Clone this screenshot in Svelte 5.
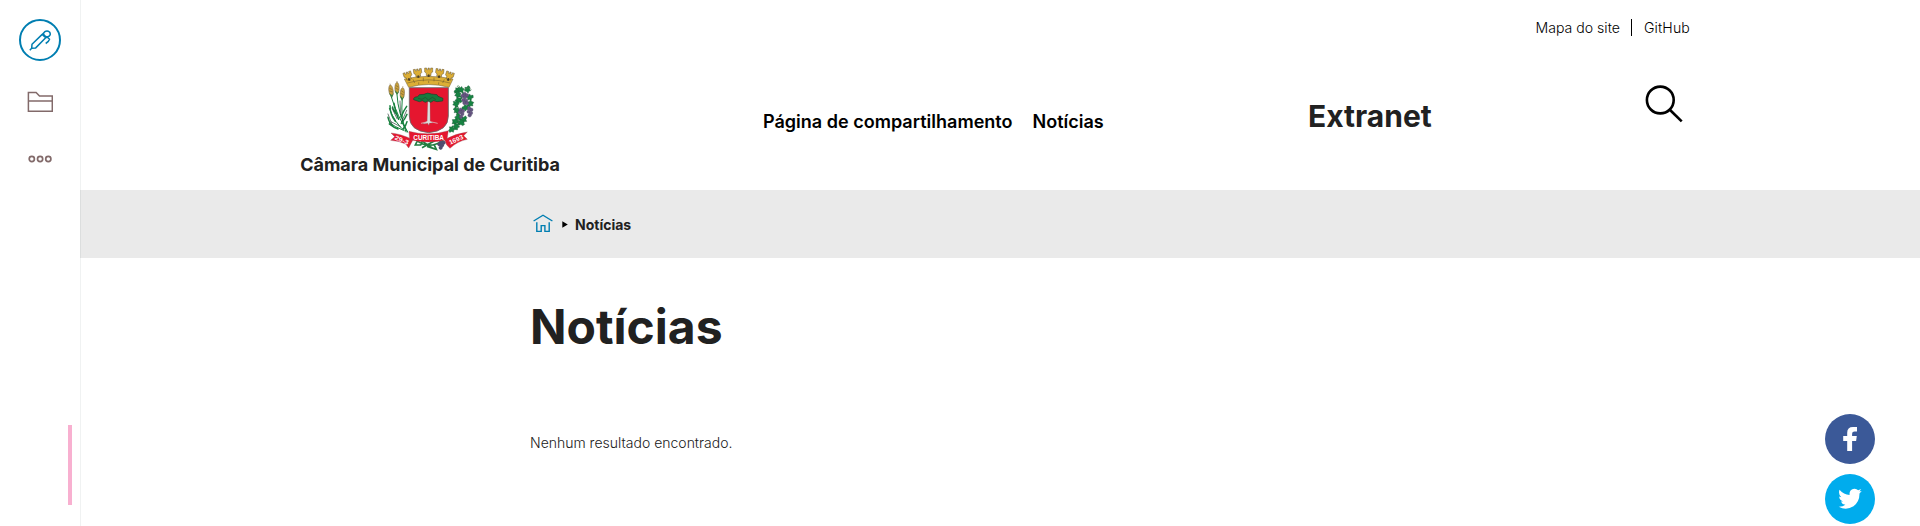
<script>
  const nav = ['Página de compartilhamento', 'Notícias'];
  const corn = [
    [63, 92, -8], [81, 84, 0], [97, 100, 4]
  ];
  const grapes = [
    [284, 102], [291, 106], [278, 107], [285, 112], [280, 120], [288, 122], [283, 129], [291, 130],
    [297, 145], [304, 149], [296, 155], [303, 159], [299, 166], [272, 149], [279, 153], [270, 157], [277, 162], [273, 170],
    [213, 247], [221, 248], [208, 253], [216, 256], [212, 263]
  ];
  const vines = [
    [262, 92], [272, 89], [264, 104], [293, 88], [300, 112], [266, 121], [258, 132], [301, 131],
    [286, 143], [260, 151], [264, 172], [282, 178], [256, 185], [274, 188], [259, 199], [245, 208]
  ];
  const towers = [[113, 45, -18], [143, 36, -8], [176, 33, 0], [209, 36, 8], [239, 45, 18]];
</script>

<div class="page">
  <aside>
    <span class="edit">
      <svg width="22" height="22" viewBox="0 0 22 22" fill="none" stroke="#007eb1" stroke-width="1.5" stroke-linejoin="round">
        <path d="M.8 21.2l1.9-1.9 M2.7 19.3l.3-4L13.2 5.4l3.5 3.4L6.7 18.9l-4 .4z M13.2 5.4l2.6-2.7q2.4-1.7 4.7.3 1.6 2.4-.2 4l-3.6 1.8 M14.4 4.2q.4 3.6 4.6 3.8 M18.3 8.2l2.3 2q-.4 2-3.9 4.3" />
      </svg>
    </span>
    <svg class="folder" width="26" height="22" viewBox="0 0 26 22" fill="none" stroke="#826a6a" stroke-width="1.5">
      <path d="M1.4 20.3V1.5h7.7L12.5 5h12.8v15.3zM1.4 10h23.9" />
    </svg>
    <svg class="dots" width="24" height="8" viewBox="0 0 24 8" fill="none" stroke="#826a6a" stroke-width="1.7">
      <circle cx="3.8" cy="4" r="2.6" /><circle cx="12.1" cy="4" r="2.6" /><circle cx="20.3" cy="4" r="2.6" />
    </svg>
    <span class="handle"></span>
  </aside>

  <main>
    <header>
      <div class="tools"><a href="#mapa">Mapa do site</a><i></i><a class="git" href="#git">GitHub</a></div>
      <div class="brandrow">
        <div class="brand">
          <svg width="93" height="84" viewBox="45 21 279 252">
            <g fill="none" stroke="#17813e" stroke-linecap="round">
              <path stroke-width="3" d="M113 216Q82 170 63 108M112 216Q84 160 81 104M108 216Q91 180 97 113M103 212Q75 190 58 145M100 211Q74 200 58 188" />
              <path stroke-width="4.5" d="M70 200Q58 190 54 172M76 184Q60 163 60 137M86 178Q75 155 72 130M93 171Q101 151 110 139M84 207Q71 203 58 192M94 190Q105 178 111 163M99 207Q108 198 111 185M82 166Q69 151 68 141" />
              <path stroke-width="2" stroke="#263b32" d="M66 193L54 162M81 176L66 144M96 183L110 151M91 200L63 185M92 164L90 123" />
            </g>
            {#each corn as [x, y, r]}
              <g transform="translate({x} {y}) rotate({r})">
                <ellipse rx="6.5" ry="17" fill="#c7a13b" stroke="#74634a" stroke-width="1.5" />
                <path d="M-4-8L4-3M-5 0L5 5M0-18V-21" stroke="#826638" stroke-width="2" />
                <path d="M-7 6Q-3 17 0 22Q5 16 7 6L2 14Z" fill="#388043" />
              </g>
            {/each}
            <path d="M263 85Q292 94 269 121T266 163T247 209" fill="none" stroke="#267743" stroke-width="4" />
            {#each vines as [x, y], i}
              <path transform="translate({x} {y}) rotate({i * 47})" d="M-10 1L-5-3-5-9 1-7 6-10 7-3 11 2 5 5 3 10-2 6-8 8z" fill="#168342" stroke="#24553a" />
            {/each}
            <path d="M280 91Q297 77 304 89M262 82q-1-10 9 0" fill="none" stroke="#4b8154" stroke-width="2" />
            {#each grapes as [x, y]}
              <circle cx={x} cy={y} r="5.2" fill="#685582" stroke="#40425d" />
            {/each}
            <g stroke="#5d4d2c" stroke-width="1.4" fill="#dcae35">
              <path d="M103 57Q176 41 249 57L237 82Q176 65 116 82Z" />
              {#each towers as [x, y, r]}
                <g transform="translate({x} {y}) rotate({r})">
                  <path d="M-12-9h6v5h4v-5h4v5h4v-5h6v12l-5 4v7H-7v-7l-5-4z" />
                  <path d="M-3 18v-6q3-5 6 0v6z" fill="#4c3f26" stroke="none" />
                </g>
              {/each}
              <path fill="none" d="M112 69Q176 50 240 69M129 58l5 11M160 53v11M192 53v11M223 58l-5 11M146 67v7M206 67v7M176 62v7" />
            </g>
            <path d="M118 83H235V168Q235 213 176 218Q118 213 118 168Z" fill="#e5162f" stroke="#666" stroke-width="2.5" />
            <path d="M173.5 123h6.5l.5 61 8 5-10 0-2 7-3-6-16 2 14-8z" fill="#ddd" stroke="#777" stroke-width=".8" />
            <path d="M153 190l20-5h8l22 5" fill="none" stroke="#ddd" stroke-width="2" />
            <path d="M131 119q-2-8 12-9l5-6 14-1q11-7 22-1l17 2 3 5 15 6-1 8-17 2-10-3-9 5-8-4-8 4-9-5-9 3z" fill="#187a3d" stroke="#223d2c" stroke-width="2" />
            <path d="M144 115l12 3 10-6 9 8 12-8 11 7" fill="none" stroke="#29492f" stroke-width="2" />
            <path d="M140 241Q176 270 220 241M156 263l42-23M190 266l-40-27M141 245l-5 10 16 0 5-11M171 259l28 9-7-15" fill="none" stroke="#227d40" stroke-width="5" />
            {#each grapes.slice(18) as [x, y]}<circle cx={x} cy={y} r="5.2" fill="#514e70" />{/each}
            <g fill="#e5162f" stroke="#8b5158" stroke-width="1">
              <path d="M63 219Q91 221 129 239L116 264 107 252Q87 243 62 241L74 230Z" />
              <path d="M224 239Q258 220 292 216L281 227 292 238Q262 244 240 265L230 255Z" />
              <path d="M117 214Q176 230 235 212L231 239Q176 253 119 239Z" />
            </g>
            <g fill="#fff" font-family="Liberation Sans" font-weight="700" font-size="19" text-anchor="middle">
              <text x="176" y="241" textLength="92" lengthAdjust="spacingAndGlyphs">CURITIBA</text>
              <text transform="translate(93 246) rotate(22)" textLength="43" lengthAdjust="spacingAndGlyphs">29-3</text>
              <text transform="translate(261 245) rotate(-25)" textLength="45" lengthAdjust="spacingAndGlyphs">1693</text>
            </g>
          </svg>
          <strong>Câmara Municipal de Curitiba</strong>
        </div>
        <nav>{#each nav as item}<a href="#nav">{item}</a>{/each}</nav>
        <h2>Extranet</h2>
        <svg class="search" width="38" height="38" viewBox="0 0 38 38" fill="none" stroke="#000" stroke-width="2.6">
          <circle cx="15.3" cy="15" r="13.4" /><path d="M24.8 24.7L36.7 36.4" />
        </svg>
      </div>
    </header>

    <div class="crumbs">
      <svg width="20" height="19" viewBox="0 0 20 19" fill="none" stroke="#007eb1" stroke-width="1.4">
        <path d="M.6 7L10 1.2 19.4 7M3.8 8.2v9.2h4.4v-5.8h3.7v5.8h4.3V8.2" />
      </svg>
      <svg class="arrow" width="6" height="7" viewBox="0 0 6 7"><path d="M.3.2L5.8 3.5.3 6.8z" /></svg>
      <b>Notícias</b>
    </div>

    <section>
      <h1>Notícias</h1>
      <p>Nenhum resultado encontrado.</p>
    </section>
  </main>

  <div class="social">
    <span class="fb"><svg width="50" height="50" viewBox="0 0 50 50"><path fill="#fff" d="M22.2 37V27h-4v-5h4v-3.3q0-5.7 5.8-5.7h4v4.5h-2.5q-2.4 0-2.4 2.2V22h4.7l-.7 5h-4v10z" /></svg></span>
    <span class="tw"><svg width="50" height="50" viewBox="0 0 50 50"><path fill="#fff" d="M14.5 15.8q4.2 5 10.1 5.3Q24 16.2 28 14.9q3-.9 5.2 1.3l3-1.1-1.8 2.5 2.3-.6-2.2 2.4q.1 8.1-6 12.8-7.3 4.7-14.8.5 4.2.1 6.7-2-3.5-.4-4.5-3.3h2.1q-3.7-1.2-3.8-4.8l2.1.6q-3.3-2.9-1.8-7.4z" /></svg></span>
  </div>
</div>

<style>
  :global(body) { margin: 0; background: #fff; overflow: hidden; }
  .page { display: flex; height: 526px; font-family: Inter, sans-serif; color: #212121; position: relative; }
  a { color: inherit; text-decoration: none; }
  svg { display: block; flex: none; }
  aside { box-sizing: border-box; width: 81px; margin-right: -1px; border-right: 1px solid rgba(0, 40, 40, .06); display: flex; flex-direction: column; align-items: center; padding-top: 19px; flex: none; position: relative; z-index: 1; }
  .edit { box-sizing: border-box; width: 42px; height: 42px; border: 2px solid #007eb1; border-radius: 50%; display: grid; place-items: center; }
  .folder { margin-top: 30px; }
  .dots { margin-top: 42px; }
  .handle { width: 4px; height: 80px; background: #f8b0d0; margin: 262px 8px 0 auto; }
  main { flex: 1; min-width: 0; }
  header { height: 190px; display: flex; flex-direction: column; }
  .tools { display: flex; justify-content: flex-end; align-items: center; height: 18px; margin: 18px 230px 0 0; font-size: 14.1px; font-weight: 300; color: #000; }
  .tools i { width: 1px; height: 17px; background: #000; margin: 0 12px 0 11px; }
  .git { letter-spacing: .15px; }
  .brandrow { display: flex; align-items: flex-start; padding: 31px 237px 0 220px; white-space: nowrap; }
  .brand { width: 260px; display: flex; flex-direction: column; align-items: center; }
  .brand svg { margin-left: 3px; }
  .brand strong { font-size: 18px; line-height: 22px; font-weight: 700; margin-top: 3px; }
  nav { display: flex; gap: 20px; width: 545px; margin: 44px 0 0 203px; font-size: 18.05px; line-height: 22px; font-weight: 600; color: #000; }
  h2 { margin: 31px 0 0; font-size: 30px; line-height: 36px; font-weight: 700; }
  .search { margin: 18px 0 0 auto; }
  .crumbs { height: 68px; background: #eaeaea; display: flex; align-items: center; padding-left: 453px; font-size: 14px; }
  .crumbs svg { margin-top: -2px; }
  .crumbs .arrow { margin: 0 7px 0 9px; }
  section { padding: 41px 0 0 450px; }
  h1 { margin: 0; font-size: 48px; line-height: 56px; font-weight: 700; }
  p { margin: 78px 0 0; font-size: 14px; line-height: 20px; font-weight: 300; }
  .social { position: absolute; left: 1825px; top: 414px; display: grid; gap: 10px; }
  .social span { width: 50px; height: 50px; border-radius: 50%; }
  .fb { background: #3b5998; }
  .tw { background: #00aced; }
</style>
